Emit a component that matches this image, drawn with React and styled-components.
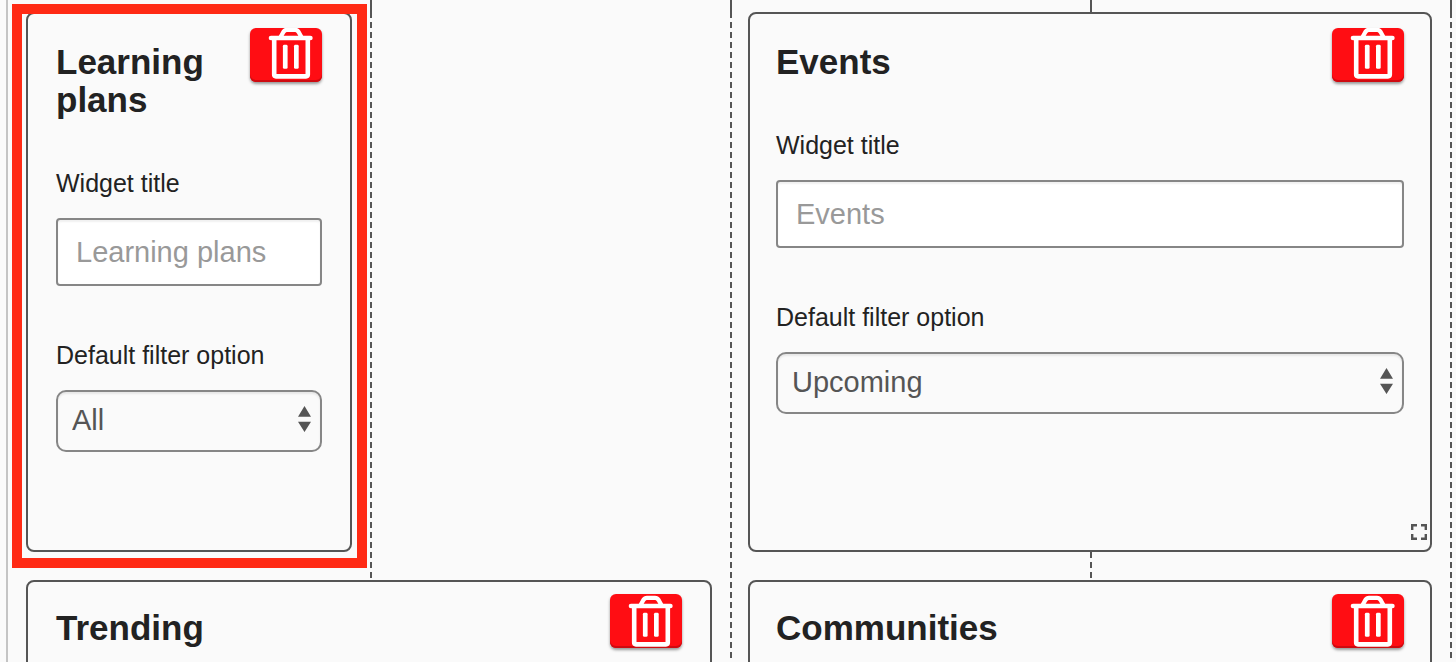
import React from 'react'
import styled, { createGlobalStyle } from 'styled-components'

const GlobalStyle = createGlobalStyle`
  * {
    box-sizing: border-box;
  }

  body {
    margin: 0;
    background: #fafafa;
    color: #222;
    font-family: "Liberation Sans", Arial, sans-serif;
  }
`;

function TrashIcon() {
  return (
    <svg width="46" height="52" viewBox="0 0 46 52" fill="none" stroke="#fff" strokeLinecap="round" strokeLinejoin="round" aria-hidden="true">
      <path d="M12.6 10 L15.4 5 Q16.8 2.8 19 2.8 H27 Q29.2 2.8 30.6 5 L33.4 10" strokeWidth="4.3" />
      <path d="M3 11 H42.4" strokeWidth="4.6" />
      <path d="M6.2 12 V47.6 Q6.2 49.4 8 49.4 H38 Q39.8 49.4 39.8 47.6 V12" strokeWidth="4.6" />
      <g fill="#fff" stroke="none">
        <rect x="14.9" y="17.8" width="4.7" height="24" rx="1.4" />
        <rect x="26" y="17.8" width="4.7" height="24" rx="1.4" />
      </g>
    </svg>
  )
}

function Header({ title, lifted }) {
  return (
    <CardHeader>
      <Title>{title}</Title>
      <DeleteButton type='button' aria-label={`Delete ${title}`} $lifted={lifted}>
        <TrashIcon />
      </DeleteButton>
    </CardHeader>
  )
}

function WidgetForm({ id, title, option }) {
  return (
    <Form>
      <Label htmlFor={`${id}-title`}>Widget title</Label>
      <TextInput id={`${id}-title`} type='text' placeholder={title} />

      <Label htmlFor={`${id}-filter`}>Default filter option</Label>
      <SelectBox>
        <Select id={`${id}-filter`} defaultValue={option}>
          <option>{option}</option>
        </Select>
        <svg width="13" height="26" viewBox="0 0 13 26" fill="#555" aria-hidden="true">
          <path d="M6.5 0 L13 10.7 H0 Z M0 15.7 H13 L6.5 26 Z" />
        </svg>
      </SelectBox>
    </Form>
  )
}

function App() {
  return (
    <>
      <GlobalStyle />
      <Board>
        <Columns>
          <Column />
          <Column />
          <Column />
          <Column />
        </Columns>

        <Widgets>
          <Card $start={1} $span={1} $top={14} $side={28}>
            <Header title='Learning plans' lifted />
            <WidgetForm id='plans' title='Learning plans' option='All' />
            <Highlight />
          </Card>

          <Card $start={3} $span={2} $top={14} $side={26}>
            <Header title='Events' lifted />
            <WidgetForm id='events' title='Events' option='Upcoming' />
            <ResizeHandle type='button' aria-label='Resize Events'>
              <svg width="16" height="16" viewBox="0 0 16 16" fill="none" stroke="#555" strokeWidth="2.4" aria-hidden="true">
                <path d="M1.2 6 V1.2 H6 M10 1.2 H14.8 V6 M14.8 10 V14.8 H10 M6 14.8 H1.2 V10" />
              </svg>
            </ResizeHandle>
          </Card>

          <Card $start={1} $span={2} $top={12} $side={28}>
            <Header title='Trending' />
          </Card>

          <Card $start={3} $span={2} $top={12} $side={26}>
            <Header title='Communities' />
          </Card>
        </Widgets>
      </Board>
    </>
  )
}

const Board = styled.main`
  display: grid;
  height: 100vh;
  margin-left: 6px;
  border-left: 2px solid #c4c4c4;
  overflow: hidden;
`;

// columns and widgets share one grid cell, widgets on top
const Columns = styled.div`
  grid-area: 1 / 1;
  display: grid;
  grid-template-columns: repeat(4, 1fr);
  padding: 0 4px;
`;

const Column = styled.div`
  background:
    linear-gradient(#555, #555) right top / 2px 18px no-repeat,
    repeating-linear-gradient(transparent 0 2px, #555 2px 8px, transparent 8px 10px) right top / 2px 100% no-repeat;
`;

const Widgets = styled.div`
  grid-area: 1 / 1;
  display: grid;
  grid-template-columns: 326fr repeat(3, 324fr);
  grid-auto-rows: 540px;
  gap: 28px 36px;
  padding: 12px 24px 0 18px;
`;

const Card = styled.section`
  position: relative;
  grid-column: ${({ $start, $span }) => `${$start} / span ${$span}`};
  padding: ${({ $top, $side }) => `${$top}px ${$side}px`};
  background: #fafafa;
  border: 2px solid #555;
  border-radius: 8px;
`;

const Highlight = styled.div`
  position: absolute;
  top: -10px;
  right: -17px;
  bottom: -18px;
  left: -16px;
  border: 10px solid #ff2a14;
  pointer-events: none;
`;

const CardHeader = styled.header`
  display: flex;
  align-items: flex-start;
  justify-content: space-between;
`;

const Title = styled.h2`
  margin: 0;
  padding: 15px 0 1px;
  font-size: 35px;
  line-height: 38px;
  font-weight: 700;
`;

const DeleteButton = styled.button`
  display: flex;
  flex: none;
  align-items: center;
  justify-content: flex-end;
  width: 72px;
  height: 54px;
  padding: ${({ $lifted }) => ($lifted ? '0 8px 4px' : '0 8px')};
  background: #ff0d13;
  border: 0;
  border-radius: 6px;
  box-shadow: inset 0 -2px 0 #cf0a10, 0 2px 3px rgba(0, 0, 0, 0.4);
  overflow: hidden;
  cursor: pointer;

  svg {
    flex: none;
  }
`;

const Form = styled.form`
  display: flex;
  flex-direction: column;
  margin-top: 48px;
`;

const Label = styled.label`
  margin-bottom: 20px;
  font-size: 25px;
  line-height: 30px;
`;

const TextInput = styled.input`
  width: 100%;
  height: 68px;
  margin-bottom: 54px;
  padding: 0 18px;
  background: #fff;
  border: 2px solid #868686;
  border-radius: 4px;
  box-shadow: inset 0 2px 2px rgba(0, 0, 0, 0.06);
  color: #222;
  font-family: inherit;
  font-size: 29px;

  &::placeholder {
    color: #999;
    opacity: 1;
  }
`;

const SelectBox = styled.div`
  position: relative;

  svg {
    position: absolute;
    top: 16px;
    right: 11px;
    pointer-events: none;
  }
`;

const Select = styled.select`
  display: block;
  width: 100%;
  height: 62px;
  padding: 0 36px 3px 14px;
  appearance: none;
  background: #fafafa;
  border: 2px solid #868686;
  border-radius: 10px;
  box-shadow: inset 0 2px 2px rgba(0, 0, 0, 0.08);
  color: #555;
  font-family: inherit;
  font-size: 29px;
`;

const ResizeHandle = styled.button`
  position: absolute;
  right: 3px;
  bottom: 10px;
  display: flex;
  padding: 0;
  background: none;
  border: 0;
  cursor: nwse-resize;
`;

export default App
